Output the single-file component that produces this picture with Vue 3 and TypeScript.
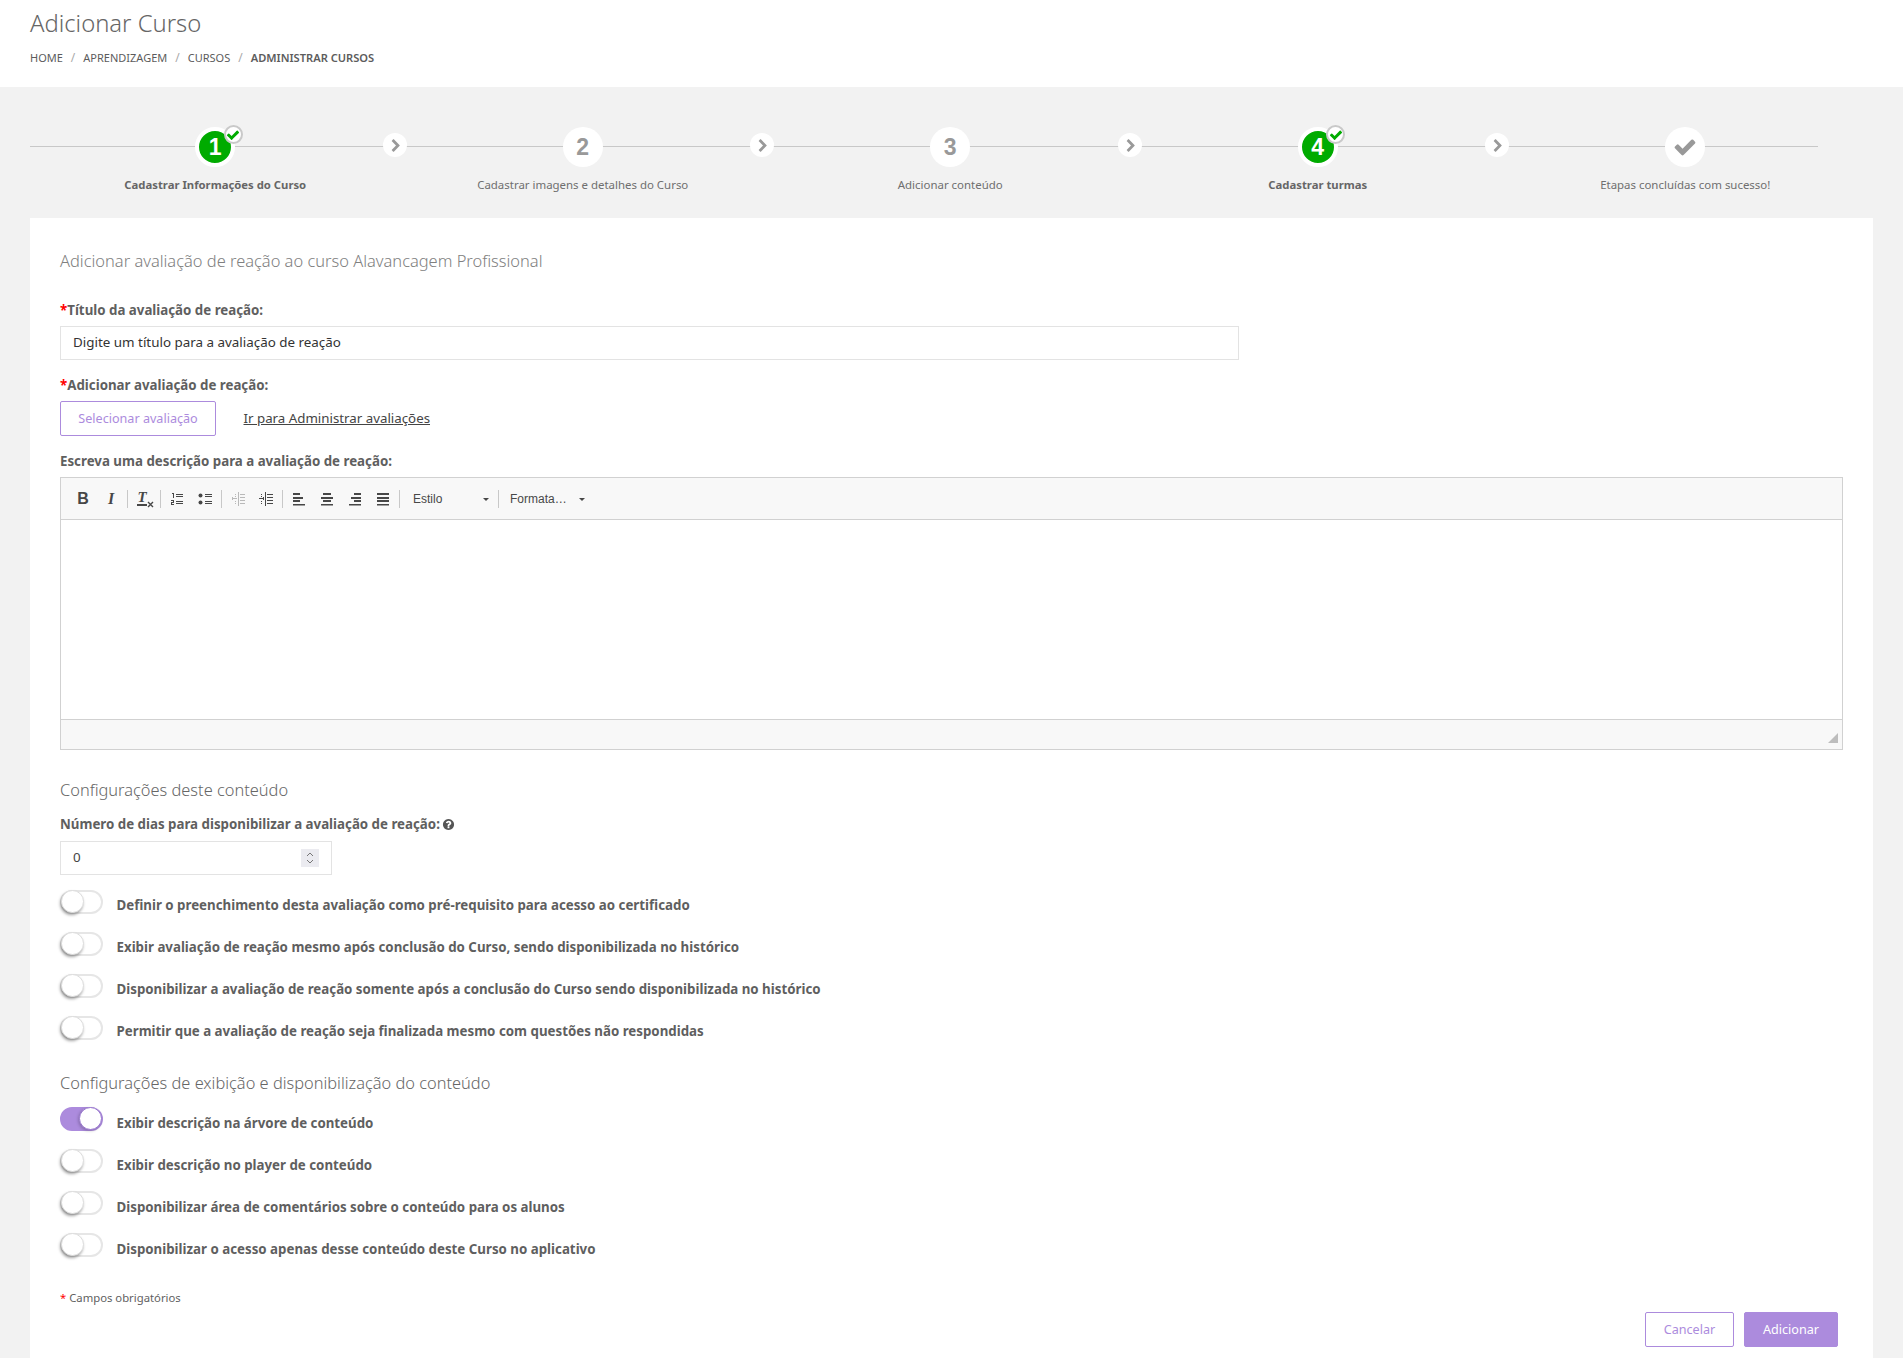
<script setup lang="ts">
interface Step { n: string; label: string; done: boolean }
const steps: Step[] = [
  { n: '1', label: 'Cadastrar Informações do Curso', done: true },
  { n: '2', label: 'Cadastrar imagens e detalhes do Curso', done: false },
  { n: '3', label: 'Adicionar conteúdo', done: false },
  { n: '4', label: 'Cadastrar turmas', done: true },
  { n: '', label: 'Etapas concluídas com sucesso!', done: false },
]
const crumbs = ['HOME', 'APRENDIZAGEM', 'CURSOS']
const config = [
  'Definir o preenchimento desta avaliação como pré-requisito para acesso ao certificado',
  'Exibir avaliação de reação mesmo após conclusão do Curso, sendo disponibilizada no histórico',
  'Disponibilizar a avaliação de reação somente após a conclusão do Curso sendo disponibilizada no histórico',
  'Permitir que a avaliação de reação seja finalizada mesmo com questões não respondidas',
]
const display = [
  { t: 'Exibir descrição na árvore de conteúdo', on: true },
  { t: 'Exibir descrição no player de conteúdo', on: false },
  { t: 'Disponibilizar área de comentários sobre o conteúdo para os alunos', on: false },
  { t: 'Disponibilizar o acesso apenas desse conteúdo deste Curso no aplicativo', on: false },
]
const CHECK = 'M1671 566q0 40-28 68l-724 724-136 136q-28 28-68 28t-68-28l-136-136-362-362q-28-28-28-68t28-68l136-136q28-28 68-28t68 28l294 295 656-657q28-28 68-28t68 28l136 136q28 28 28 68z'
const CHEV = 'M1363 877l-742 742q-19 19-45 19t-45-19l-166-166q-19-19-19-45t19-45l531-531-531-531q-19-19-19-45t19-45l166-166q19-19 45-19t45 19l742 742q19 19 19 45t-19 45z'
const QUESTION = 'M1024 1376v-192q0-14-9-23t-23-9h-192q-14 0-23 9t-9 23v192q0 14 9 23t23 9h192q14 0 23-9t9-23zm256-672q0-88-55.500-163t-138.500-116-170-41q-243 0-371 213-15 24 8 42l132 100q7 6 19 6 16 0 25-12 53-68 86-92 34-24 86-24 48 0 85.500 26t37.500 59q0 38-20 61t-68 45q-63 28-115.500 86.500t-52.500 125.500v36q0 14 9 23t23 9h192q14 0 23-9t9-23q0-19 21.500-49.500t54.500-49.500q32-18 49-28.500t46-35 44.500-48 28-60.500 12.500-81zm384 192q0 209-103 385.500t-279.500 279.500-385.500 103-385.500-103-279.500-279.500-103-385.500 103-385.500 279.500-279.500 385.500-103 385.500 103 279.500 279.500 103 385.500z'
const aligns = [
  'M2 2h7v2H2zM2 6h10v2H2zM2 9h7v2H2zM2 13h12v1.500H2z',
  'M4 2h8v2H4zM2 6h12v2H2zM4 9h8v2H4zM2 13h12v1.500H2z',
  'M7 2h7v2H7zM4 6h10v2H4zM7 9h7v2H7zM2 13h12v1.500H2z',
  'M2 2h12v2H2zM2 6h12v2H2zM2 9h12v2H2zM2 13h12v1.500H2z',
]
</script>

<template>
  <div class="page">
    <header class="top">
      <h1 class="title">Adicionar Curso</h1>
      <nav class="crumbs">
        <template v-for="c in crumbs" :key="c">
          <span>{{ c }}</span><i class="slash">/</i>
        </template>
        <b>ADMINISTRAR CURSOS</b>
      </nav>
    </header>

    <section class="stepper">
      <div v-for="(s, i) in steps" :key="s.label" class="step" :class="{ done: s.done }">
        <div class="disc">
          <span v-if="s.n" class="num">{{ s.n }}</span>
          <svg v-else class="bigcheck" viewBox="0 0 1792 1792"><path :d="CHECK" /></svg>
          <span v-if="s.done" class="tick">
            <svg viewBox="0 0 1792 1792"><path :d="CHECK" /></svg>
          </span>
        </div>
        <div class="step-label">{{ s.label }}</div>
        <span v-if="i < 4" class="arrow">
          <svg viewBox="0 0 1792 1792"><path :d="CHEV" /></svg>
        </span>
      </div>
    </section>

    <main class="card">
      <h2 class="sub first">Adicionar avaliação de reação ao curso Alavancagem Profissional</h2>

      <label class="lbl l1"><em>*</em>Título da avaliação de reação:</label>
      <input class="field wide" type="text" placeholder="Digite um título para a avaliação de reação" />

      <label class="lbl l2"><em>*</em>Adicionar avaliação de reação:</label>
      <div class="pick">
        <button class="btn outline sel" type="button">Selecionar avaliação</button>
        <a class="link" href="#">Ir para Administrar avaliações</a>
      </div>

      <label class="lbl l3">Escreva uma descrição para a avaliação de reação:</label>
      <div class="editor">
        <div class="toolbar">
          <span class="tb"><span class="g-b">B</span></span>
          <span class="tb"><span class="g-i">I</span></span>
          <span class="sep"></span>
          <span class="tb tx">
            <span class="g-t">T</span>
            <svg class="g-x" viewBox="0 0 7 7"><path d="M1 1l5 5M6 1L1 6" /></svg>
          </span>
          <span class="sep"></span>
          <span class="tb">
            <svg class="ic" viewBox="0 0 16 16"><path d="M3 2h2v5H4V3H3zM2 9h3v3H3v1h2v1H2v-3h2v-1H2zM7 3h7v1H7zM7 5h7v1H7zM7 10h7v1H7zM7 12h7v1H7z" /></svg>
          </span>
          <span class="tb">
            <svg class="ic" viewBox="0 0 16 16"><circle cx="3.500" cy="4.500" r="2" /><circle cx="3.500" cy="11.500" r="2" /><path d="M8 3h7v1H8zM8 5h7v1H8zM8 10h7v1H8zM8 12h7v1H8z" /></svg>
          </span>
          <span class="sep"></span>
          <span class="tb">
            <svg class="ic faded" viewBox="0 0 16 16"><path d="M8 1h1v14H8zM10 3h5v1h-5zM10 6h5v1h-5zM10 9h5v1h-5zM10 12h5v1h-5zM3 7h4v1H3zM2 6h1v3H2zM5 3h1v1H5zM5 5h1v1H5zM5 10h1v1H5zM5 12h1v1H5z" /></svg>
          </span>
          <span class="tb">
            <svg class="ic" viewBox="0 0 16 16"><path d="M7 1h1v14H7zM9 3h6v1H9zM9 6h6v1H9zM9 9h6v1H9zM9 12h6v1H9zM1 7h4v1H1zM5 6h1v3H5zM3 3h1v1H3zM3 5h1v1H3zM3 10h1v1H3zM3 12h1v1H3z" /></svg>
          </span>
          <span class="sep"></span>
          <span v-for="d in aligns" :key="d" class="tb">
            <svg class="ic" viewBox="0 0 16 16"><path :d="d" /></svg>
          </span>
          <span class="sep"></span>
          <span class="combo c1">Estilo<i class="caret"></i></span>
          <span class="sep"></span>
          <span class="combo c2">Formata…<i class="caret"></i></span>
        </div>
        <div class="area"></div>
        <div class="status"><i class="grip"></i></div>
      </div>

      <h2 class="sub s2">Configurações deste conteúdo</h2>
      <label class="lbl l4">Número de dias para disponibilizar a avaliação de reação:
        <svg class="help" viewBox="0 0 1792 1792"><path :d="QUESTION" /></svg>
      </label>
      <div class="num-wrap">
        <input class="field" type="text" value="0" />
        <span class="spin">
          <svg viewBox="0 0 10 14"><path d="M2 5l3-3 3 3M2 9l3 3 3-3" /></svg>
        </span>
      </div>

      <ul class="toggles t1">
        <li v-for="t in config" :key="t">
          <span class="switch"><span class="knob"></span></span>
          <span class="t-text">{{ t }}</span>
        </li>
      </ul>

      <h2 class="sub s3">Configurações de exibição e disponibilização do conteúdo</h2>
      <ul class="toggles t2">
        <li v-for="t in display" :key="t.t">
          <span class="switch" :class="{ on: t.on }"><span class="knob"></span></span>
          <span class="t-text">{{ t.t }}</span>
        </li>
      </ul>

      <p class="foot"><em>*</em> Campos obrigatórios</p>

      <div class="actions">
        <button class="btn outline" type="button">Cancelar</button>
        <button class="btn solid" type="button">Adicionar</button>
      </div>
    </main>
  </div>
</template>

<style>
html, body { margin: 0; background: #f2f2f2; }
</style>

<style scoped>
.page {
  width: 1903px;
  font-family: "Noto Sans", "Open Sans", sans-serif;
  color: #5f5f5f;
  background: #f2f2f2;
}
.top {
  box-sizing: border-box;
  height: 87px;
  padding: 7px 30px 0;
  background: #fff;
}
.title {
  margin: 0;
  font-size: 23.800px;
  line-height: 32px;
  font-weight: 300;
  color: #666;
}
.crumbs {
  margin-top: 10px;
  display: flex;
  align-items: center;
  height: 16px;
  font-size: 11px;
  color: #5c5c5c;
}
.crumbs b { font-weight: 600; font-size: 11.100px; }
.slash {
  font-style: normal;
  color: #aaa;
  margin: 0 8px;
  font-size: 12px;
}
.stepper {
  position: relative;
  display: grid;
  grid-template-columns: repeat(5, 367.500px);
  margin-left: 31.500px;
  padding-top: 40px;
  padding-bottom: 25px;
}
.stepper::before {
  content: "";
  position: absolute;
  left: -1.500px;
  top: 59px;
  width: 1788px;
  height: 1px;
  background: #c8c8c8;
}
.step {
  position: relative;
  display: flex;
  flex-direction: column;
  align-items: center;
}
.disc {
  position: relative;
  box-sizing: border-box;
  width: 40px;
  height: 40px;
  border-radius: 50%;
  background: #fff;
  display: flex;
  align-items: center;
  justify-content: center;
}
.done .disc { border: 4px solid #fff; background: #00ab00; }
.num {
  font-family: "Liberation Sans", sans-serif;
  font-weight: 700;
  font-size: 23px;
  color: #999;
}
.done .num { color: #fff; }
.bigcheck { width: 24px; height: 24px; fill: #999; }
.tick {
  position: absolute;
  top: -6px;
  right: -11.500px;
  box-sizing: border-box;
  width: 19px;
  height: 19px;
  border: 2px solid #c9c9c9;
  border-radius: 50%;
  background: #fff;
  display: flex;
  align-items: center;
  justify-content: center;
}
.tick svg { width: 14px; height: 14px; fill: #00ab00; }
.step-label {
  margin-top: 10px;
  height: 16px;
  line-height: 16px;
  font-size: 11.450px;
  color: #6f6f6f;
  white-space: nowrap;
}
.done .step-label { font-weight: 700; color: #666; font-size: 11.300px; }
.arrow {
  position: absolute;
  left: calc(50% + 167.500px);
  top: 6px;
  width: 24px;
  height: 24px;
  border-radius: 50%;
  background: #fff;
  display: flex;
  align-items: center;
  justify-content: center;
}
.arrow svg { width: 14px; height: 14px; fill: #999; margin: 1px 0 0 2px; }
.card {
  box-sizing: border-box;
  margin: 0 30px;
  height: 1140px;
  padding: 0 30px;
  background: #fff;
}
.sub {
  margin: 0;
  font-size: 16.400px;
  line-height: 22px;
  font-weight: 300;
  color: #666;
}
.first { padding-top: 32px; color: #808080; font-size: 16.460px; }
.lbl {
  display: block;
  font-size: 13.300px;
  line-height: 18px;
  font-weight: 700;
  color: #5f5f5f;
}
.lbl em, .foot em { color: #f00; font-style: normal; }
.l1 { margin-top: 29px; margin-bottom: 7px; }
.l2 { margin-top: 16px; margin-bottom: 7px; }
.l3 { margin-top: 16px; margin-bottom: 7px; }
.l4 { margin-top: 14px; margin-bottom: 8px; display: flex; align-items: center; gap: 2px; }
.field {
  box-sizing: border-box;
  display: block;
  height: 34px;
  width: 100%;
  padding: 0 12px 2px;
  border: 1px solid #e3e3e3;
  outline: none;
  font-family: inherit;
  font-size: 13.400px;
  color: #444;
  background: #fff;
}
.field::placeholder { color: #333; opacity: 1; }
.wide { width: 1179px; }
.pick { display: flex; align-items: center; gap: 27.500px; }
.btn {
  box-sizing: border-box;
  height: 35px;
  border-radius: 2px;
  font-family: inherit;
  font-size: 12.600px;
  padding: 0 0 1px;
  cursor: pointer;
}
.outline { background: #fff; border: 1px solid #ac8bdd; color: #ac8bdd; }
.solid { background: #ac8bdd; border: 1px solid #ac8bdd; color: #fff; }
.sel { width: 156px; }
.link { font-size: 13.300px; color: #444; text-decoration: underline; margin-bottom: 2px; }
.editor {
  box-sizing: border-box;
  width: 1783px;
  height: 273px;
  border: 1px solid #d1d1d1;
  display: flex;
  flex-direction: column;
}
.toolbar {
  box-sizing: border-box;
  height: 42px;
  flex: none;
  padding: 0 0 0 8px;
  display: flex;
  align-items: center;
  background: #f8f8f8;
  border-bottom: 1px solid #d1d1d1;
}
.tb {
  position: relative;
  width: 28px;
  height: 20px;
  display: flex;
  align-items: center;
  justify-content: center;
  color: #474747;
  flex: none;
}
.sep {
  flex: none;
  width: 1px;
  height: 18px;
  margin: 0 2px;
  background: #c8c8c8;
}
.g-b { font: 700 16px "Liberation Sans", sans-serif; }
.g-i { font: italic 700 16px "Liberation Serif", serif; }
.g-t {
  font: italic 700 15px/13px "Liberation Serif", serif;
  border-bottom: 2px solid #474747;
  margin-left: -4px;
}
.g-x {
  position: absolute;
  left: 17px;
  top: 12px;
  width: 7px;
  height: 7px;
  fill: none;
  stroke: #474747;
  stroke-width: 1.400;
}
.ic { width: 16px; height: 16px; fill: #474747; }
.faded { opacity: 0.35; }
.combo {
  box-sizing: border-box;
  position: relative;
  flex: none;
  display: flex;
  align-items: center;
  height: 20px;
  font: 12px "Liberation Sans", sans-serif;
  color: #484848;
}
.c1 { width: 94px; padding-left: 11px; }
.c2 { width: 90px; padding-left: 9px; }
.caret {
  position: absolute;
  top: 9px;
  width: 0;
  height: 0;
  border: 3px solid transparent;
  border-top-color: #474747;
  border-bottom: 0;
}
.c1 .caret { right: 7px; }
.c2 .caret { right: 6px; }
.area { flex: 1; background: #fff; }
.status {
  position: relative;
  flex: none;
  height: 29px;
  background: #f8f8f8;
  border-top: 1px solid #d1d1d1;
}
.grip {
  position: absolute;
  right: 4px;
  bottom: 6px;
  width: 0;
  height: 0;
  border-style: solid;
  border-width: 0 0 10px 10px;
  border-color: transparent transparent #bdbdbd transparent;
}
.s2 { margin-top: 29px; }
.s3 { margin-top: 32px; }
.help { width: 13px; height: 13px; fill: #555; }
.num-wrap { position: relative; width: 272px; }
.spin {
  position: absolute;
  left: 241px;
  top: 8px;
  width: 18px;
  height: 18px;
  background: #ebebf0;
  display: flex;
  align-items: center;
  justify-content: center;
}
.spin svg { width: 10px; height: 14px; fill: none; stroke: #777; stroke-width: 1; }
.toggles {
  list-style: none;
  margin: 0;
  padding: 0;
  display: flex;
  flex-direction: column;
  gap: 18px;
}
.t1 { margin-top: 15px; }
.t2 { margin-top: 13px; }
.toggles li { display: flex; height: 24px; gap: 13.500px; }
.switch {
  position: relative;
  box-sizing: border-box;
  flex: none;
  width: 43px;
  height: 24px;
  border: 2px solid #e6e6e6;
  border-radius: 12px;
  background: #fff;
}
.knob {
  position: absolute;
  left: -1px;
  top: -2px;
  box-sizing: border-box;
  width: 23px;
  height: 23px;
  border-radius: 50%;
  background: #fff;
  border: 1px solid #ddd;
  box-shadow: -1px 2px 3px rgba(0, 0, 0, 0.35);
}
.switch.on { background: #ac8bdd; border-color: #ac8bdd; }
.switch.on .knob { left: auto; right: -1px; border-color: #9a78d0; box-shadow: -1px 1px 3px rgba(0, 0, 0, 0.2); }
.t-text {
  font-size: 13.300px;
  line-height: 18px;
  font-weight: 700;
  margin-top: 6.500px;
  white-space: nowrap;
}
.t1 .t-text { margin-top: 5.500px; }
.foot {
  margin: 33px 0 0;
  font-size: 11.300px;
  line-height: 16px;
  color: #5f5f5f;
}
.actions {
  margin: 6px 5px 0 0;
  display: flex;
  justify-content: flex-end;
  gap: 10px;
}
.actions .outline { width: 89px; }
.actions .solid { width: 94px; }
</style>
